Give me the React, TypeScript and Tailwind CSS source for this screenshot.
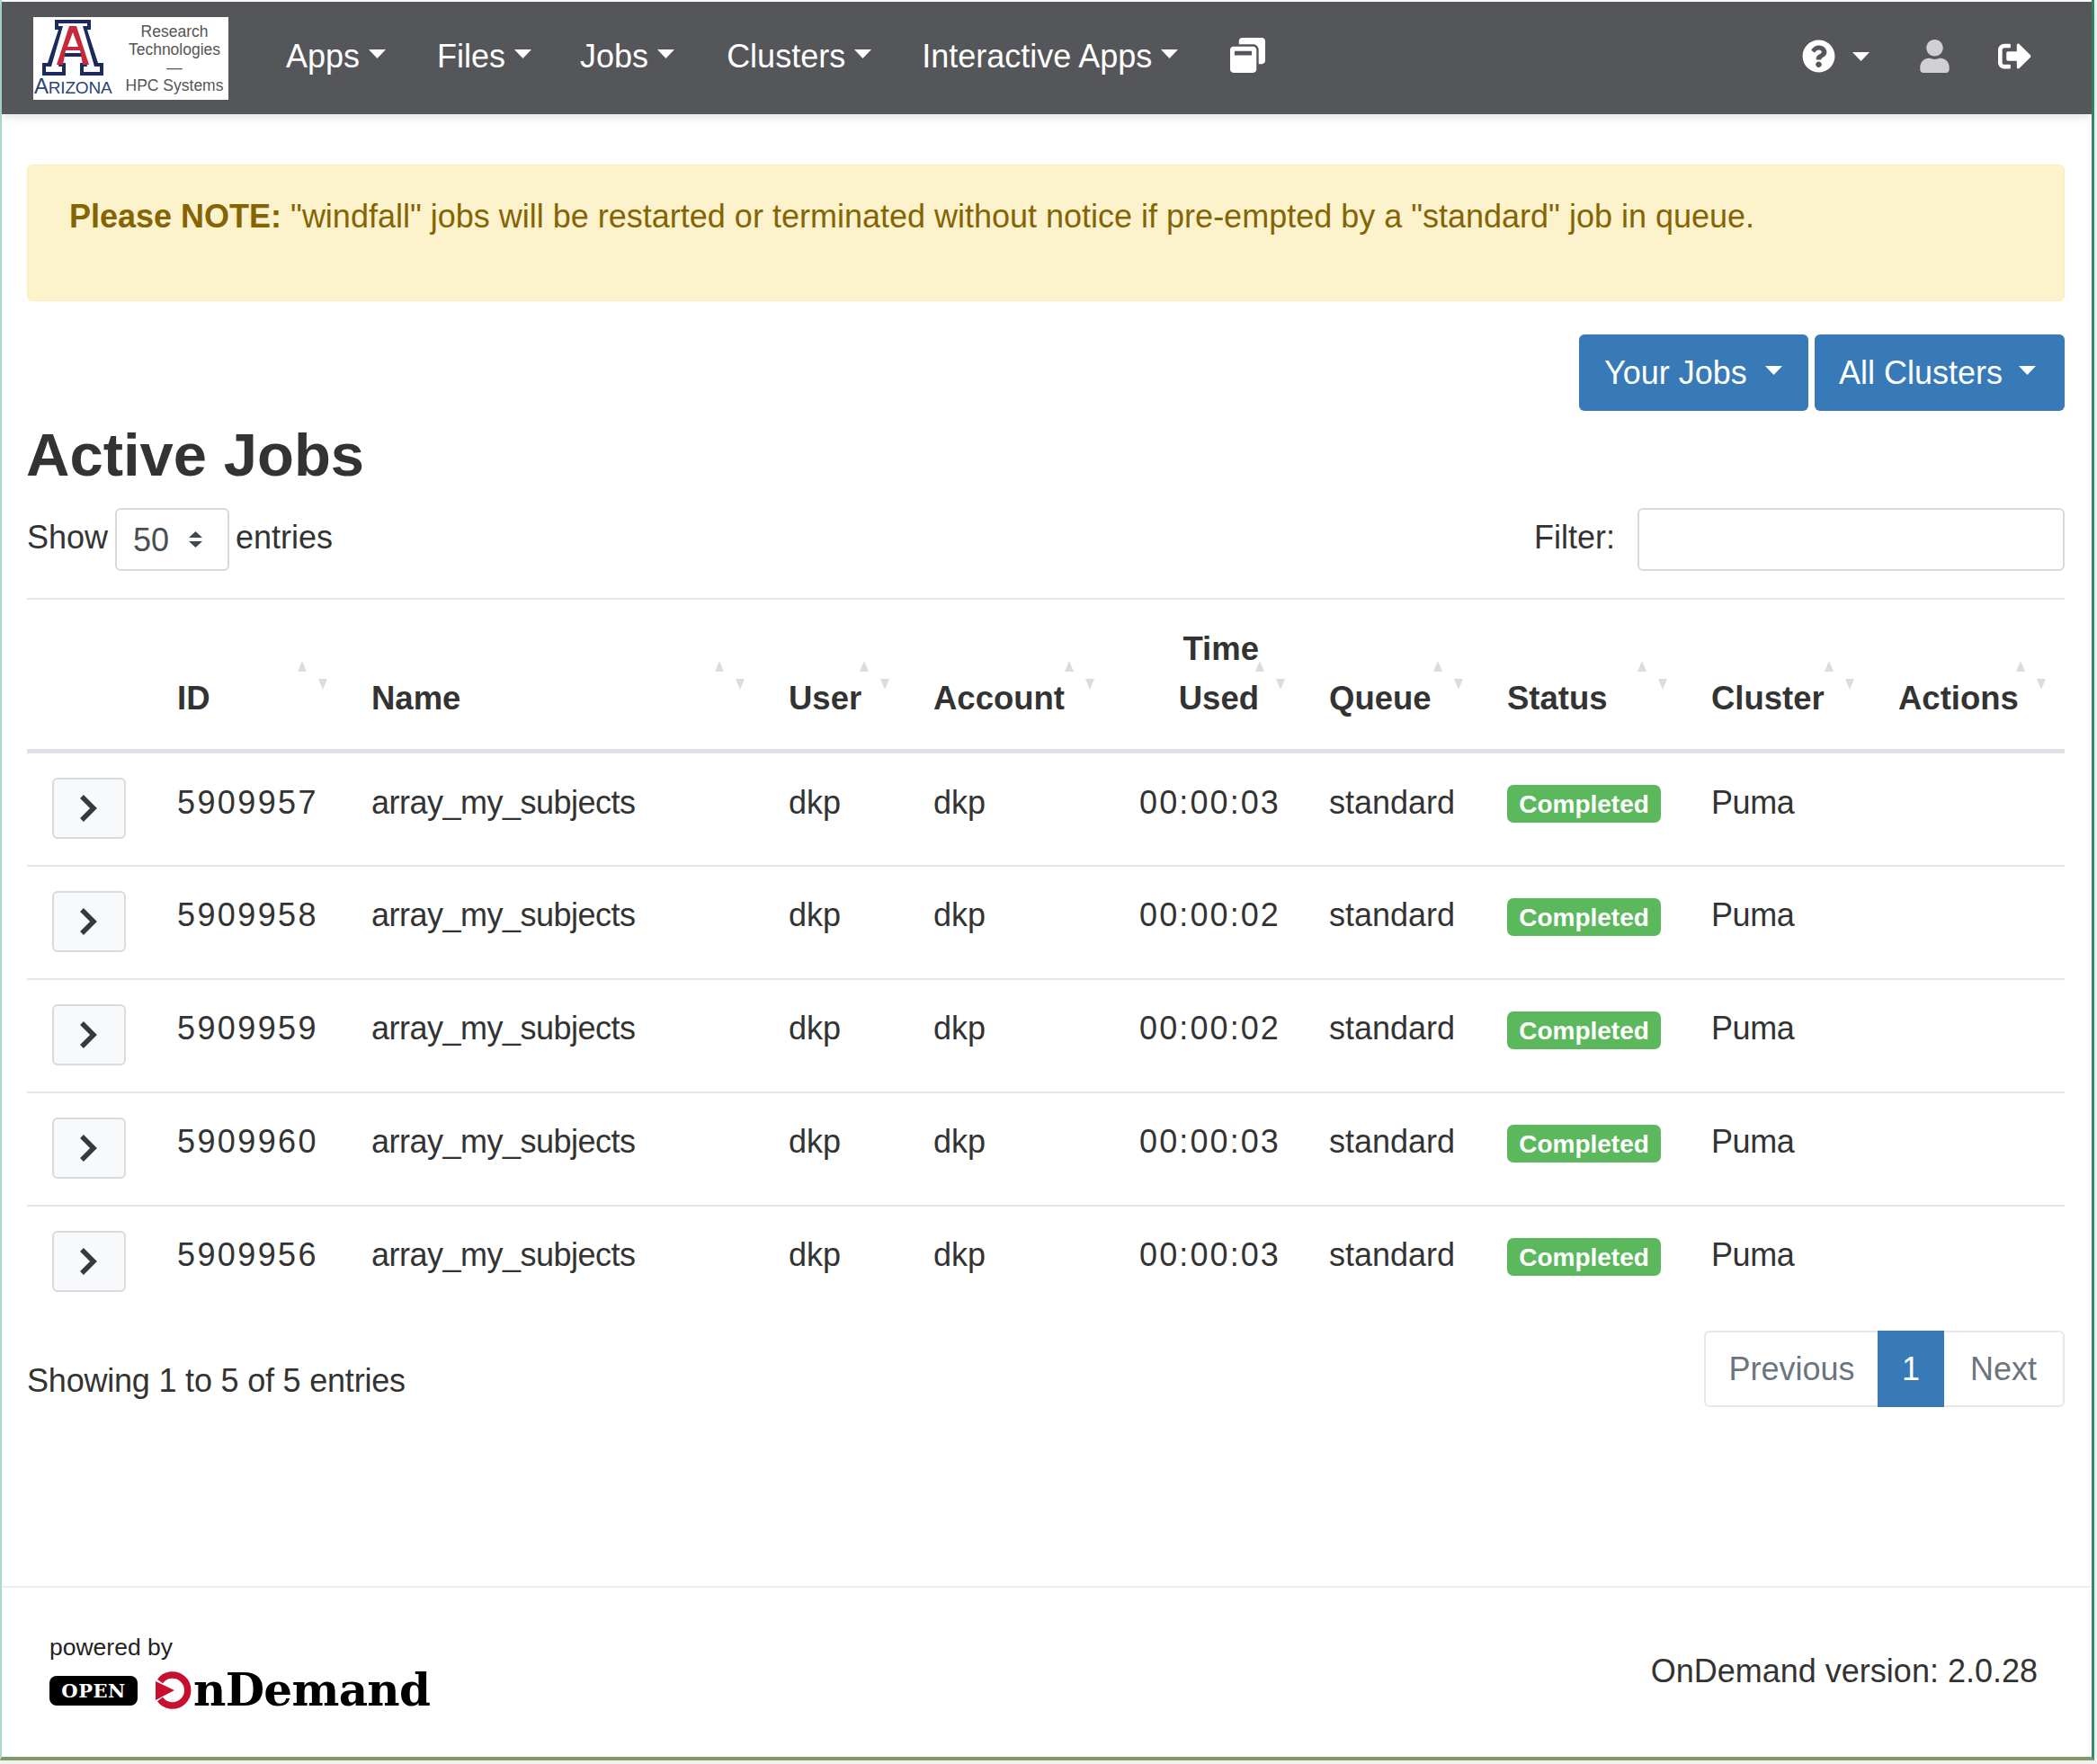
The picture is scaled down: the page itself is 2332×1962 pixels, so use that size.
import React from "react";
import { FaWindowRestore, FaQuestionCircle, FaUser, FaSignOutAlt } from "react-icons/fa";

function Caret({ w = 19, h = 10, className = "" }: { w?: number; h?: number; className?: string }) {
  return (
    <svg width={w} height={h} viewBox="0 0 20 10" preserveAspectRatio="none" className={className}>
      <polygon points="0,0 20,0 10,10" fill="currentColor" />
    </svg>
  );
}

function SortArrows({ up, down }: { up: number; down: number }) {
  return (
    <>
      <svg width="10" height="12" viewBox="0 0 10 12" className="absolute bottom-[86px]" style={{ right: up }}>
        <polygon points="5,0 10,12 0,12" fill="#dcdcdc" />
      </svg>
      <svg width="10" height="12" viewBox="0 0 10 12" className="absolute bottom-[66px]" style={{ right: down }}>
        <polygon points="0,0 10,0 5,12" fill="#dcdcdc" />
      </svg>
    </>
  );
}

function BlockA() {
  return (
    <svg width="68" height="62" viewBox="0 0 68 62" className="absolute left-[10px] top-[3px]">
      <polygon
        points="14,0 54,0 54,11 50,11 62,48 68,48 68,62 42,62 42,48 46,48 44,41 24,41 22,48 26,48 26,62 0,62 0,48 6,48 18,11 14,11"
        fill="#1c2a5e"
      />
      <polygon
        points="18,4 50,4 50,7 45,7 58,52 64,52 64,58 46,58 46,52 50,52 47,37 21,37 18,52 22,52 22,58 4,58 4,52 10,52 23,7 18,7"
        fill="#ffffff"
      />
      <polygon points="30,7 38,7 52,50 45,50 42,34 26,34 23,50 16,50" fill="#c8283c" />
      <polygon points="34,14 40,30 28,30" fill="#ffffff" />
    </svg>
  );
}

function Logo() {
  return (
    <div className="relative w-[217px] h-[92px] bg-white shrink-0 flex justify-end overflow-hidden">
      <BlockA />
      <div className="absolute left-[1px] bottom-[2px] text-[#2b4478] text-[19px] leading-[22px] tracking-[-0.2px]">
        <span className="text-[24px]">A</span>RIZONA
      </div>
      <div className="w-[100px] mr-[10px] pt-[6px] flex flex-col items-center text-[#555555] text-[17.5px] leading-[20px] whitespace-nowrap">
        <span>Research</span>
        <span>Technologies</span>
        <span>—</span>
        <span>HPC Systems</span>
      </div>
    </div>
  );
}

function NavItem({ label, ml }: { label: string; ml: string }) {
  return (
    <div className={`flex items-center ${ml} text-white`}>
      <span>{label}</span>
      <Caret className="ml-[10px] mt-[-6px]" />
    </div>
  );
}

function Th({
  label,
  cls,
  up = 44,
  down = 21,
}: {
  label: React.ReactNode;
  cls?: string;
  up?: number;
  down?: number;
}) {
  return (
    <th className={`relative align-bottom pl-[28px] pr-[50px] pb-[29px] text-[36.5px] font-bold text-left ${cls ?? ""}`}>
      {label}
      <SortArrows up={up} down={down} />
    </th>
  );
}

const rows = [
  ["5909957", "00:00:03"],
  ["5909958", "00:00:02"],
  ["5909959", "00:00:02"],
  ["5909960", "00:00:03"],
  ["5909956", "00:00:03"],
];

export default function App() {
  return (
    <div className="w-[2332px] h-[1962px] bg-[#f1f1f1] font-['Liberation_Sans',Arial,sans-serif] text-[36px] leading-[55px] text-[#333333] overflow-hidden">
      <div className="w-[2329px] h-[1958px] pt-[2px] flex flex-col bg-white border-l-[2px] border-l-[#a9dcc9] border-r-[3px] border-r-[#2f8a6c] border-b-[4px] border-b-[#7d9a68]">
        <nav className="relative h-[125px] shrink-0 bg-[#55565a] flex items-center pl-[35px] pr-[67px] shadow-[0_3px_10px_rgba(0,0,0,0.12)]">
          <Logo />
          <div className="flex items-center mt-[-4px]">
            <NavItem label="Apps" ml="ml-[64px]" />
            <NavItem label="Files" ml="ml-[57px]" />
            <NavItem label="Jobs" ml="ml-[54px]" />
            <NavItem label="Clusters" ml="ml-[58px]" />
            <NavItem label="Interactive Apps" ml="ml-[56px]" />
            <FaWindowRestore className="ml-[58px] text-white mt-[-2px]" size={39} />
          </div>
          <div className="ml-auto flex items-center mt-[-4px]">
            <FaQuestionCircle className="text-white" size={37} />
            <Caret className="ml-[19px] text-white" />
            <FaUser className="ml-[54px] text-[#d0d0d2]" size={37} />
            <FaSignOutAlt className="ml-[52px] text-white" size={37} />
          </div>
        </nav>

        <main className="flex-1 pl-[28px] pr-[30px] min-h-0">
          <div className="mt-[56px] h-[152px] rounded-[6px] bg-[#fcf3cd] border border-[#fbeeba] pl-[46px] pt-[29px] text-[#856404]">
            <strong>Please NOTE:</strong> "windfall" jobs will be restarted or terminated without notice if pre-empted by a "standard" job in queue.
          </div>

          <div className="mt-[37px] flex justify-end gap-[7px]">
            <button className="h-[85px] w-[255px] rounded-[6px] bg-[#377ab7] text-white flex items-center pl-[28px]">
              <span>Your Jobs</span>
              <Caret className="ml-[20px] mt-[-6px]" />
            </button>
            <button className="h-[85px] w-[278px] rounded-[6px] bg-[#377ab7] text-white flex items-center pl-[27px]">
              <span>All Clusters</span>
              <Caret className="ml-[18px] mt-[-6px]" />
            </button>
          </div>

          <h1 className="mt-[9px] ml-[-1px] text-[67px] leading-[80px] font-bold text-[#333333]">Active Jobs</h1>

          <div className="mt-[19px] flex items-center justify-between">
            <div className="flex items-center">
              <span className="mt-[-6px]">Show</span>
              <div className="ml-[8px] w-[127px] h-[70px] rounded-[6px] border-2 border-[#d6dbe2] flex items-center justify-between pl-[18px] pr-[28px] text-[#495057]">
                <span>50</span>
                <svg width="15" height="18" viewBox="0 0 15 18">
                  <polygon points="7.5,0 15,7 0,7" fill="#3f4750" />
                  <polygon points="0,11 15,11 7.5,18" fill="#3f4750" />
                </svg>
              </div>
              <span className="ml-[7px] mt-[-6px]">entries</span>
            </div>
            <div className="flex items-center">
              <span className="mt-[-6px]">Filter:</span>
              <div className="ml-[25px] w-[475px] h-[70px] rounded-[6px] border-2 border-[#d6dbe2] bg-white" />
            </div>
          </div>

          <table className="mt-[30px] w-[2266px] table-fixed border-collapse border-t-2 border-t-[#e4e7ea]">
            <colgroup>
              <col className="w-[139px]" />
              <col className="w-[216px]" />
              <col className="w-[464px]" />
              <col className="w-[161px]" />
              <col className="w-[228px]" />
              <col className="w-[212px]" />
              <col className="w-[198px]" />
              <col className="w-[227px]" />
              <col className="w-[208px]" />
              <col className="w-[213px]" />
            </colgroup>
            <thead>
              <tr className="h-[169px] border-b-[5px] border-b-[#dee2e6]">
                <th />
                <Th label="ID" />
                <Th label="Name" />
                <Th label="User" />
                <Th label="Account" />
                <Th label={<>Time<br />Used</>} cls="text-right" />
                <Th label="Queue" />
                <Th label="Status" />
                <Th label="Cluster" />
                <Th label="Actions" />
              </tr>
            </thead>
            <tbody>
              {rows.map(([id, time], i) => {
                const pt = i === 0 ? "pt-[27px]" : "pt-[26px]";
                return (
                  <tr key={id} className={`${i === 0 ? "h-[128px]" : "h-[126px]"} ${i < 4 ? "border-b-2 border-b-[#e4e7ea]" : ""}`}>
                    <td className="align-top pt-[27px] pl-[28px]">
                      <div className="w-[82px] h-[68px] rounded-[6px] bg-[#f8f9fa] border-2 border-[#d8dadd] flex items-center justify-center">
                        <svg width="22" height="32" viewBox="0 0 22 32" className="ml-[-3px]">
                          <polyline points="4,3 17,16 4,29" fill="none" stroke="#343a40" strokeWidth="5.5" />
                        </svg>
                      </div>
                    </td>
                    <td className={`align-top ${pt} pl-[28px] tracking-[2.4px]`}>{id}</td>
                    <td className={`align-top ${pt} pl-[28px] tracking-[-0.5px]`}>array_my_subjects</td>
                    <td className={`align-top ${pt} pl-[28px]`}>dkp</td>
                    <td className={`align-top ${pt} pl-[28px]`}>dkp</td>
                    <td className={`align-top ${pt} pr-[26px] text-right tracking-[2.1px]`}>{time}</td>
                    <td className={`align-top ${pt} pl-[28px]`}>standard</td>
                    <td className="align-top pt-[35px] pl-[28px]">
                      <div className="w-[171px] h-[42px] rounded-[7px] bg-[#5cb85c] text-white text-[28px] leading-[44px] font-bold text-center">
                        Completed
                      </div>
                    </td>
                    <td className={`align-top ${pt} pl-[28px] tracking-[-0.4px]`}>Puma</td>
                    <td />
                  </tr>
                );
              })}
            </tbody>
          </table>

          <div className="mt-[13px] flex justify-between items-start">
            <div className="pt-[28px] tracking-[-0.2px]">Showing 1 to 5 of 5 entries</div>
            <div className="flex h-[85px] rounded-[6px] border-2 border-[#e6e8eb]">
              <div className="w-[191px] flex items-center justify-center text-[#6c757d]">Previous</div>
              <div className="w-[74px] my-[-2px] flex items-center justify-center bg-[#377ab7] text-white">1</div>
              <div className="w-[132px] flex items-center justify-center text-[#6c757d]">Next</div>
            </div>
          </div>
        </main>

        <footer className="h-[190px] shrink-0 border-t-2 border-t-[#eeeeee] flex items-start justify-between pl-[53px] pr-[60px]">
          <div className="pt-[46px]">
            <div className="text-[26.5px] leading-[40px] text-[#222222]">powered by</div>
            <div className="flex items-center mt-[8px] h-[40px]">
              <div className="w-[98px] h-[33px] rounded-[8px] bg-black text-white flex items-center justify-center font-['DejaVu_Serif',serif] font-bold text-[21px] leading-none tracking-[0.5px]">
                OPEN
              </div>
              <svg width="42" height="42" viewBox="0 0 42 42" className="ml-[19px]">
                <path d="M6 11 A17 17 0 1 1 6 31" fill="none" stroke="#c8102e" strokeWidth="7.5" />
                <polygon points="1,11 22,21 1,32" fill="#c8102e" />
              </svg>
              <span className="font-['DejaVu_Serif',serif] font-bold text-black text-[50px] leading-none tracking-[-0.7px] ml-[1px]">nDemand</span>
            </div>
          </div>
          <div className="pt-[65px]">OnDemand version: 2.0.28</div>
        </footer>
      </div>
    </div>
  );
}
